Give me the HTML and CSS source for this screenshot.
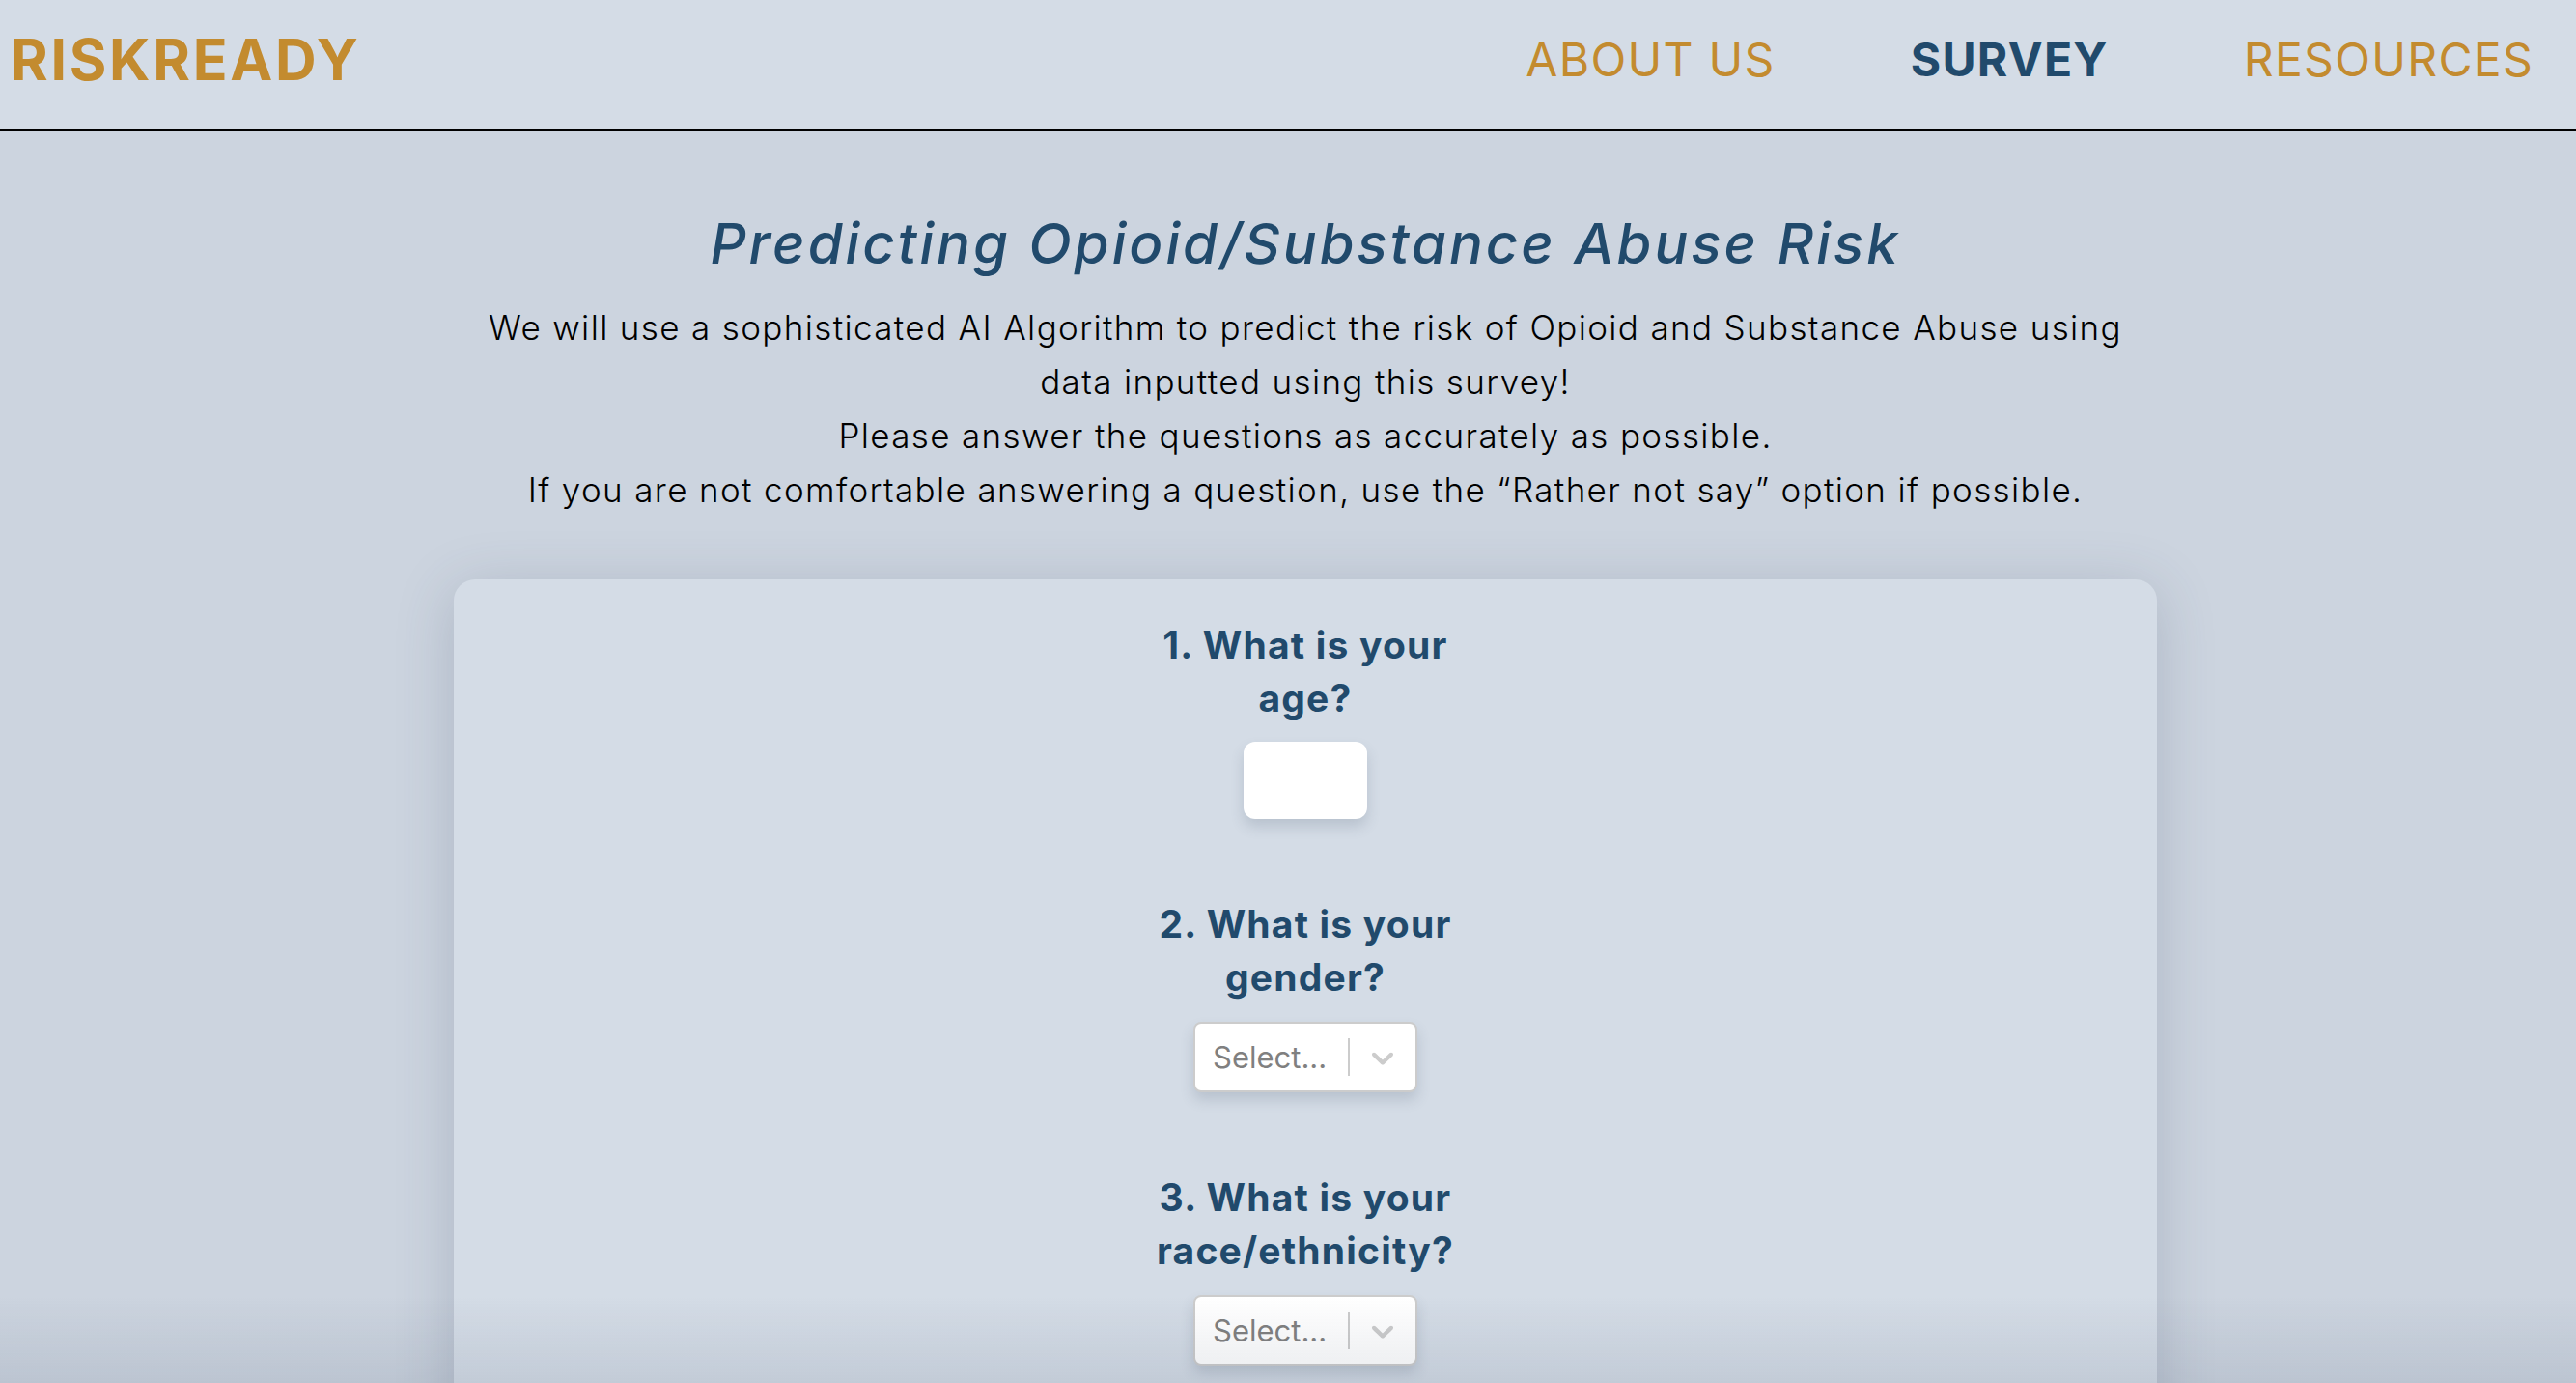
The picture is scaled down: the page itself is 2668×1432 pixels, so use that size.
FILE: index.html
```html
<!DOCTYPE html>
<html lang="en">
<head>
<meta charset="utf-8">
<title>RiskReady – Survey</title>
<link rel="stylesheet" href="styles.css">
</head>
<body>
<header class="topbar">
  <div class="logo">RISKREADY</div>
  <nav class="nav">
    <a class="nav-link" href="#">ABOUT US</a>
    <a class="nav-link active" href="#">SURVEY</a>
    <a class="nav-link" href="#">RESOURCES</a>
  </nav>
</header>
<main class="main">
  <h1 class="title">Predicting Opioid/Substance Abuse Risk</h1>
  <p class="intro">We will use a sophisticated AI Algorithm to predict the risk of Opioid and Substance Abuse using data inputted using this survey!<br>Please answer the questions as accurately as possible.<br>If you are not comfortable answering a question, use the “Rather not say” option if possible.</p>
  <section class="card">
    <div class="question">
      <h2 class="q-text">1. What is your age?</h2>
      <input class="age-input" type="text" aria-label="age">
    </div>
    <div class="question">
      <h2 class="q-text">2. What is your gender?</h2>
      <div class="select">
        <span class="placeholder">Select...</span>
        <span class="sep"></span>
        <span class="indicator"><svg viewBox="0 0 20 20" width="38" height="38"><path fill="#cccccc" d="M4.516 7.548c0.436-0.446 1.043-0.481 1.576 0l3.908 3.747 3.908-3.747c0.533-0.481 1.141-0.446 1.574 0 0.436 0.445 0.408 1.197 0 1.615-0.406 0.418-4.695 4.502-4.695 4.502-0.217 0.223-0.502 0.335-0.787 0.335s-0.57-0.112-0.789-0.335c0 0-4.287-4.084-4.695-4.502s-0.436-1.17 0-1.615z"/></svg></span>
      </div>
    </div>
    <div class="question">
      <h2 class="q-text">3. What is your race/ethnicity?</h2>
      <div class="select">
        <span class="placeholder">Select...</span>
        <span class="sep"></span>
        <span class="indicator"><svg viewBox="0 0 20 20" width="38" height="38"><path fill="#cccccc" d="M4.516 7.548c0.436-0.446 1.043-0.481 1.576 0l3.908 3.747 3.908-3.747c0.533-0.481 1.141-0.446 1.574 0 0.436 0.445 0.408 1.197 0 1.615-0.406 0.418-4.695 4.502-4.695 4.502-0.217 0.223-0.502 0.335-0.787 0.335s-0.57-0.112-0.789-0.335c0 0-4.287-4.084-4.695-4.502s-0.436-1.17 0-1.615z"/></svg></span>
      </div>
    </div>
  </section>
</main>
<div class="bottom-fade"></div>
</body>
</html>
```
FILE: styles.css
```css
html, body {
  margin: 0;
  padding: 0;
}
body {
  background: #ccd4df;
  font-family: Inter, "Open Sans", sans-serif;
  color: #000;
  overflow: hidden;
  height: 1432px;
}
.topbar {
  box-sizing: border-box;
  height: 136px;
  background: #d4dce6;
  border-bottom: 2px solid #000;
  display: flex;
  align-items: center;
  justify-content: space-between;
  padding: 0 44px 11px 11px;
}
.logo {
  color: #c38b2f;
  font-weight: 700;
  font-size: 59px;
  letter-spacing: 2.7px;
}
.nav {
  display: flex;
  gap: 140px;
}
.nav-link {
  text-decoration: none;
  color: #c38b2f;
  font-size: 48px;
  font-weight: 400;
  letter-spacing: 1.3px;
}
.nav-link.active {
  color: #214a6c;
  font-weight: 700;
}
.main {
  padding-left: 36px;
  display: flex;
  flex-direction: column;
  align-items: center;
}
.title {
  margin: 81px 0 0;
  font-size: 58px;
  line-height: 70px;
  font-style: italic;
  font-weight: 500;
  letter-spacing: 3px;
  color: #214a6c;
}
.intro {
  margin: 24px 0 0;
  max-width: 1750px;
  text-align: center;
  font-size: 35px;
  line-height: 56px;
  font-weight: 300;
  letter-spacing: 1.35px;
}
.card {
  margin-top: 65px;
  width: 1764px;
  min-height: 900px;
  background: #d4dce6;
  border-radius: 22px;
  box-shadow: 0 10px 60px rgba(60, 75, 100, 0.22);
  display: flex;
  flex-direction: column;
  align-items: center;
  padding-top: 40px;
  gap: 81px;
}
.question {
  width: 340px;
  display: flex;
  flex-direction: column;
  align-items: center;
}
.q-text {
  margin: 0 0 18px;
  text-align: center;
  color: #214a6c;
  font-size: 39px;
  line-height: 55px;
  font-weight: 700;
  letter-spacing: 1.2px;
}
.age-input {
  width: 128px;
  height: 80px;
  box-sizing: border-box;
  border: none;
  border-radius: 12px;
  background: #fff;
  box-shadow: 0 8px 14px rgba(60, 75, 100, 0.18);
  outline: none;
}
.select {
  margin-top: 1px;
  width: 232px;
  height: 73px;
  box-sizing: border-box;
  background: #fff;
  border: 2px solid #cccccc;
  border-radius: 8px;
  box-shadow: 0 8px 14px rgba(60, 75, 100, 0.18);
  display: flex;
  align-items: center;
  padding-left: 18px;
}
.placeholder {
  flex: 1;
  color: #808080;
  font-size: 31px;
  font-weight: 400;
}
.sep {
  width: 2px;
  height: 39px;
  background: #cccccc;
}
.indicator {
  display: flex;
  padding: 0 15px;
}
.bottom-fade {
  position: fixed;
  left: 0;
  right: 0;
  bottom: 0;
  height: 90px;
  background: linear-gradient(to bottom, rgba(60, 75, 100, 0), rgba(60, 75, 100, 0.11));
  pointer-events: none;
}
```
